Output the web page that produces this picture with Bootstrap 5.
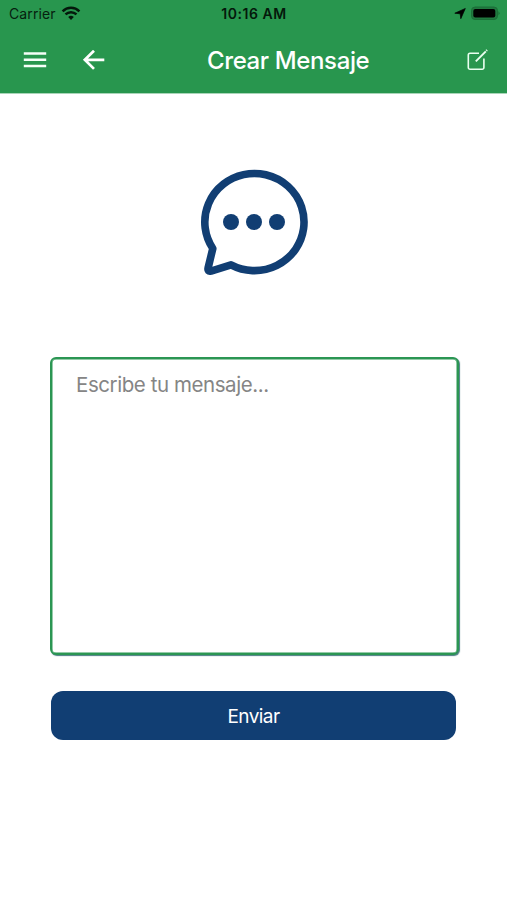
<!DOCTYPE html>
<html lang="es">
<head>
<meta charset="utf-8">
<meta name="viewport" content="width=device-width, initial-scale=1">
<title>Crear Mensaje</title>
<link rel="stylesheet" href="https://cdn.jsdelivr.net/npm/bootstrap@5.3.0/dist/css/bootstrap.min.css">
<style>
  body { font-family: Inter, "Liberation Sans", sans-serif; background: #fff; }
  svg { display: block; flex: none; }
  .app-head { background: #28964e; height: 93px; border-bottom: 0; box-shadow: 0 1px 0 #a9d5b8; }
  .status-bar { height: 27px; padding: 0 7px 0 9px; color: #06200f; display: grid; grid-template-columns: 1fr auto 1fr; line-height: 27px; }
  .carrier { font-size: 14px; letter-spacing: .1px; }
  .wifi { margin-left: 5px; }
  .clock { font-size: 14px; font-weight: 600; letter-spacing: .55px; color: #04180b; margin-left: -1px; }
  .title-bar { height: 66px; padding: 0 18px 0 23px; }
  .back-icon { margin-left: 35px; }
  .screen-title { font-size: 24px; font-weight: 500; letter-spacing: -.38px; line-height: 66px; margin-left: 102px; padding-top: 1px; }
  .bubble { margin-top: 75px; }
  .message-box, .message-box:focus { width: 409px; height: 298px; margin: 80px 0 0 2px; padding: 12px 24px; border: 2px solid #2b9653; border-radius: 6px; box-shadow: inset 0 0 0 .5px #2b9653, 1px 1px 1px #4b7c83; font-size: 20.5px; line-height: 27px; letter-spacing: -.43px; resize: none; }
  .message-box::placeholder { color: #858585; }
  .send-btn, .send-btn:hover { width: 405px; height: 49px; margin-top: 36px; background: #113e73; color: #fff; border: 0; border-radius: 12px; font-size: 19px; letter-spacing: -.55px; line-height: 51px; }
</style>
</head>
<body>
<header class="app-head text-white">
  <div class="status-bar">
    <div class="d-flex align-items-center carrier"><span>Carrier</span>
      <svg class="wifi" width="20" height="15" viewBox="0 0 20 15" fill="none" stroke="#04180b" stroke-width="2.5"><path d="M1.6 5.3a12 12 0 0 1 16.8 0M4.5 8.4a7.9 7.9 0 0 1 11 0"/><path d="M10 14l-2.8-2.9a4 4 0 0 1 5.6 0z" fill="#04180b" stroke="none"/></svg>
    </div>
    <div class="clock">10:16 AM</div>
    <div class="d-flex align-items-center justify-content-end">
      <svg width="46" height="15" viewBox="0 0 46 15"><path d="M.8 7.2 11.3 2.5 6.8 12.700 6.200 7.800z" fill="#000" stroke="#000" stroke-width=".7" stroke-linejoin="round"/><rect x="17.500" y="1" width="26" height="12.500" rx="3.600" fill="#20793f" stroke="#1b6f38"/><rect x="19.300" y="3" width="22" height="8.500" rx="2" fill="#000"/><path d="M44.500 5.300q2 2 0 4z" fill="#176a33"/></svg>
    </div>
  </div>
  <nav class="title-bar d-flex align-items-center">
    <svg width="24" height="18" viewBox="0 0 24 18" stroke="#f5fff8" stroke-width="2.5"><path d="M.8 2.500H23.200M.8 8.800H23.200M.8 15H23.200"/></svg>
    <svg class="back-icon" width="23" height="20" viewBox="0 0 23 20" fill="none" stroke="#fff" stroke-width="2.7"><path d="M12 .7 2.800 9.800l9.200 9.100M2.800 9.800H22.300"/></svg>
    <h1 class="screen-title mb-0">Crear Mensaje</h1>
    <svg class="ms-auto" width="22" height="22" viewBox="0 0 22 22" fill="none" stroke="#e9fff0" stroke-width="1.6" stroke-linejoin="round"><path d="M12 4.300H3A1.700 1.700 0 0 0 1.300 6V18.500A1.700 1.700 0 0 0 3 20.200H15.200A1.700 1.700 0 0 0 16.900 18.500V9.500"/><path d="M8.800 12.300 18.800 2.300" stroke-width="1.900"/><path d="m19.300 1.800.8-.8" stroke-width="2"/></svg>
  </nav>
</header>
<main class="d-flex flex-column align-items-center">
  <svg class="bubble" width="110" height="109" viewBox="0 0 110 109"><path d="M13.800 80.500A49.600 48.600 0 1 1 32 96.900L12 103.100Q8.300 103.900 9.100 100Z" fill="none" stroke="#113e73" stroke-width="7.600" stroke-linejoin="round"/><g fill="#113e73"><circle cx="32" cy="54" r="8"/><circle cx="55" cy="54" r="8"/><circle cx="78" cy="54" r="8"/></g></svg>
  <textarea class="message-box form-control" placeholder="Escribe tu mensaje..." aria-label="Mensaje"></textarea>
  <button type="button" class="btn send-btn p-0">Enviar</button>
</main>
<script src="https://cdn.jsdelivr.net/npm/bootstrap@5.3.0/dist/js/bootstrap.bundle.min.js"></script>
</body>
</html>
